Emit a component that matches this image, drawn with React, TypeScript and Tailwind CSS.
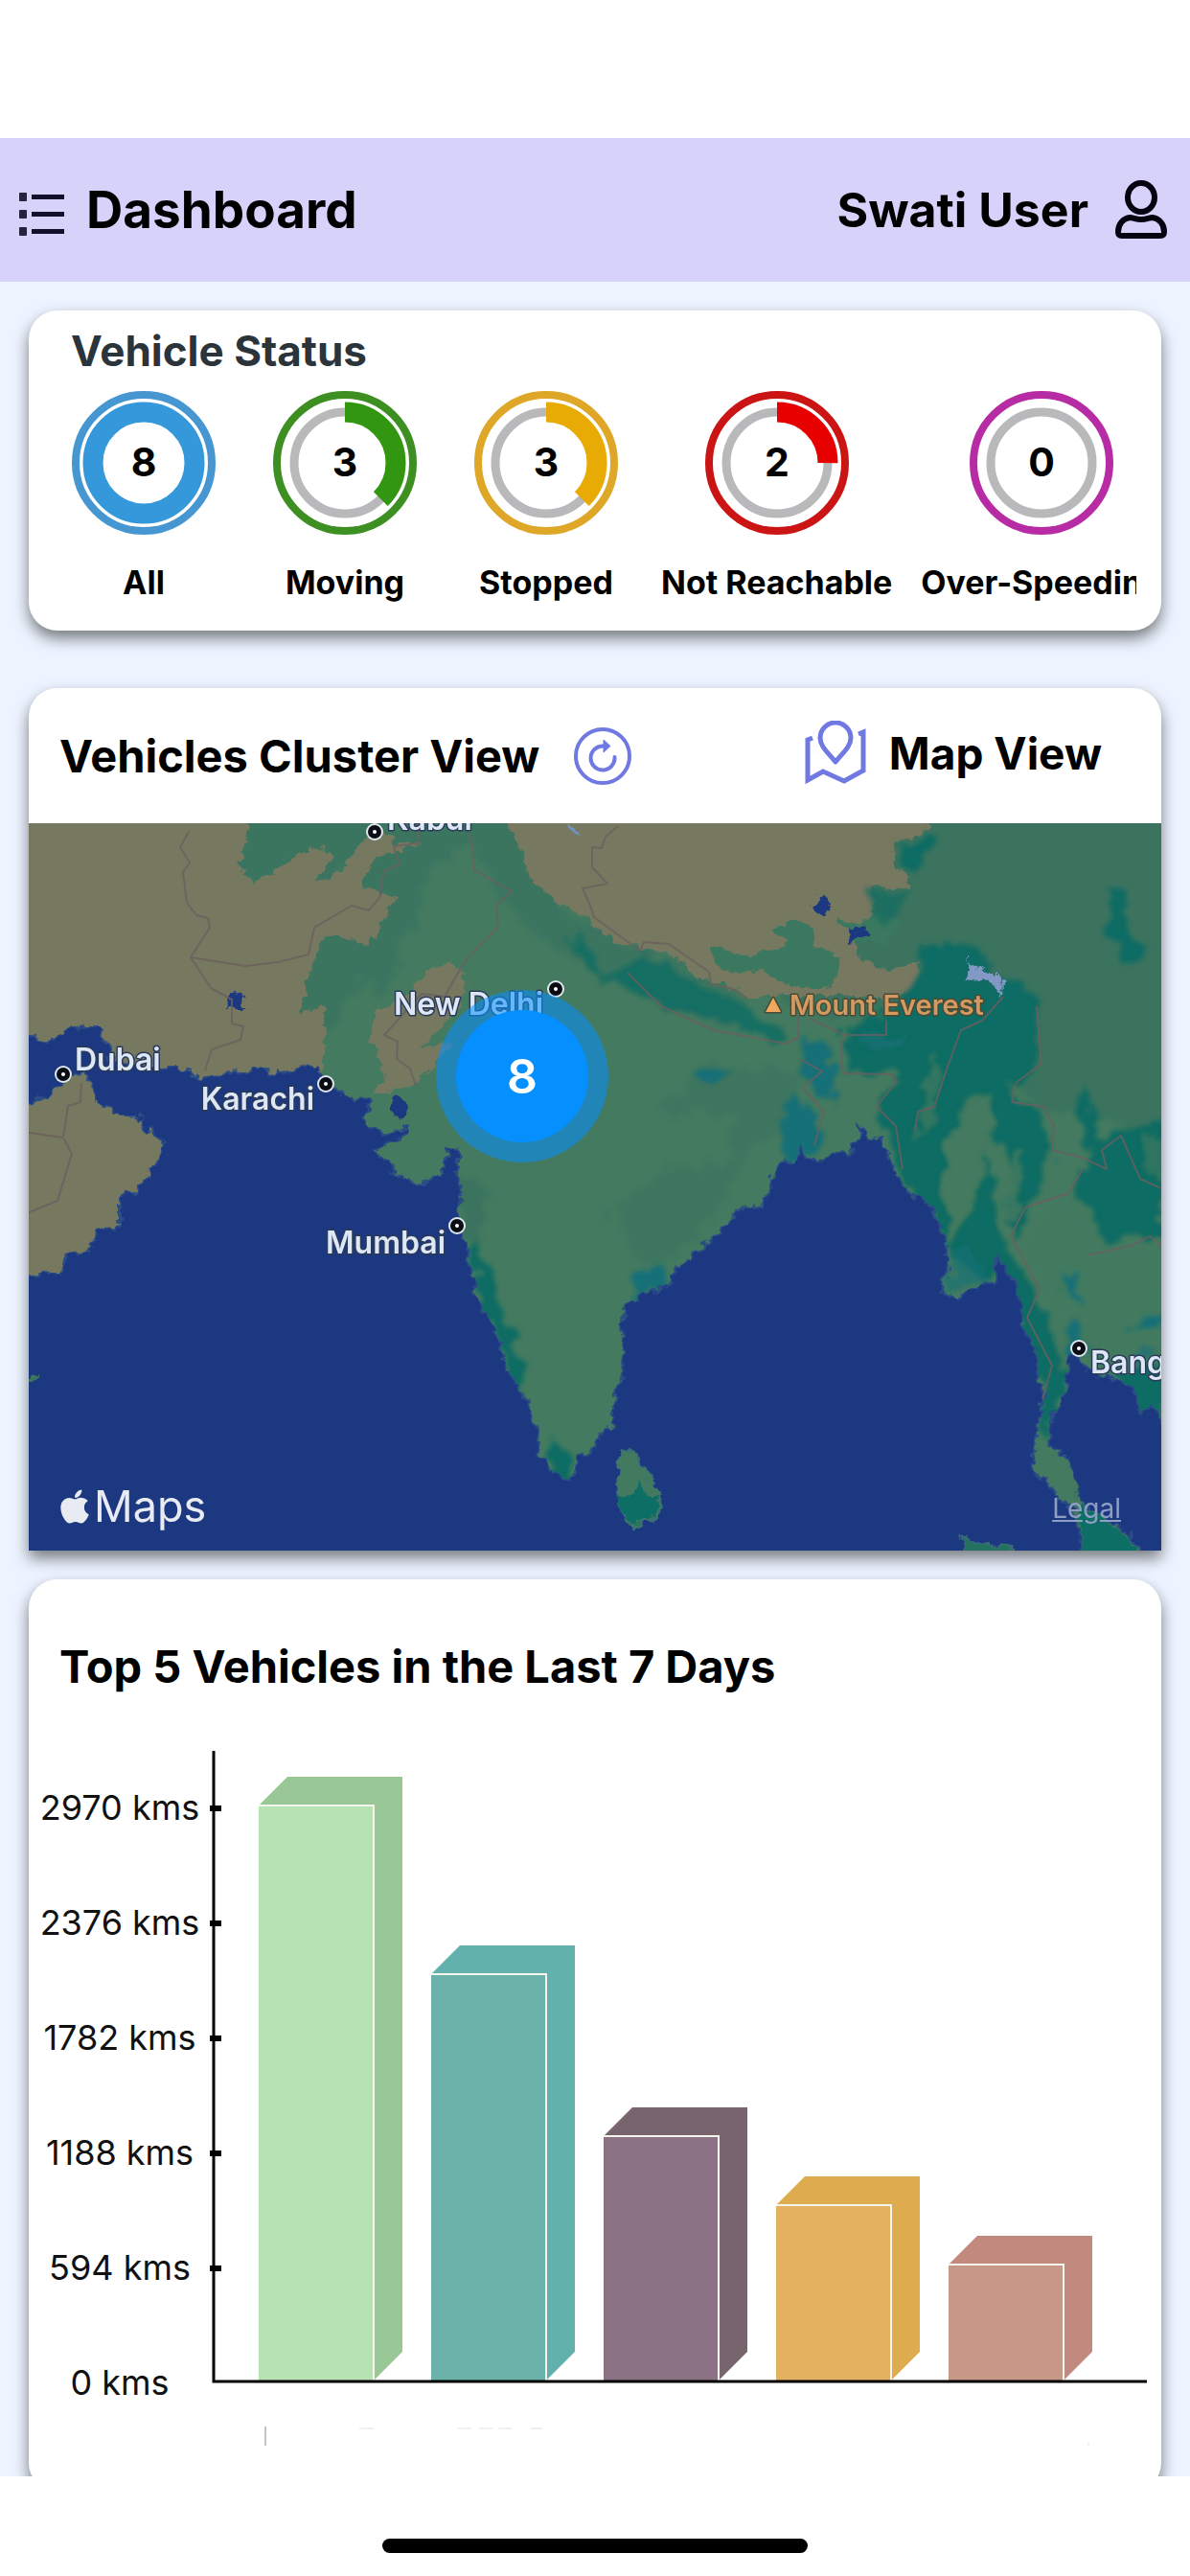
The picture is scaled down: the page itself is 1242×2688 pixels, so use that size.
// Fleet dashboard: vehicle status rings, cluster map and top-distance chart.

import { FaApple } from "react-icons/fa";

interface StatusItem {
  label: string;
  count: number;
  ring: string;
  fill: string;
}

const TOTAL = 8;

const STATUSES: StatusItem[] = [
  { label: "All", count: 8, ring: "#4596d1", fill: "#3498db" },
  { label: "Moving", count: 3, ring: "#3d8f22", fill: "#329610" },
  { label: "Stopped", count: 3, ring: "#dfa727", fill: "#e8aa04" },
  { label: "Not Reachable", count: 2, ring: "#cb1414", fill: "#e60000" },
  { label: "Over-Speeding", count: 0, ring: "#b72ba4", fill: "#b72ba4" },
];

interface Bar {
  x: number;
  top: number;
  front: string;
  side: string;
}

const BARS: Bar[] = [
  { x: 270, top: 1884, front: "#b7e3b2", side: "#9ac796" },
  { x: 450, top: 2060, front: "#6bb2ab", side: "#62b1ac" },
  { x: 630, top: 2229, front: "#8b7385", side: "#77646c" },
  { x: 810, top: 2301, front: "#e4b161", side: "#deab4e" },
  { x: 990, top: 2363, front: "#c79887", side: "#c28a7e" },
];

const AXIS_BOTTOM = 2484;

const TICKS = [
  { y: 1887, label: "2970 kms" },
  { y: 2007, label: "2376 kms" },
  { y: 2127, label: "1782 kms" },
  { y: 2247, label: "1188 kms" },
  { y: 2367, label: "594 kms" },
  { y: 2487, label: "0 kms" },
];

interface City {
  name: string;
  pin: [number, number];
  text: [number, number];
  anchor: "start" | "end";
}

const CITIES: City[] = [
  { name: "Kabul", pin: [391, 868], text: [404, 866], anchor: "start" },
  { name: "New Delhi", pin: [580, 1032], text: [567, 1059], anchor: "end" },
  { name: "Dubai", pin: [66, 1121], text: [78, 1117], anchor: "start" },
  { name: "Karachi", pin: [340, 1131], text: [328, 1158], anchor: "end" },
  { name: "Mumbai", pin: [477, 1279], text: [465, 1308], anchor: "end" },
  { name: "Bangkok", pin: [1126, 1407], text: [1138, 1433], anchor: "start" },
];

function ListIcon() {
  return (
    <svg viewBox="0 0 48 56" className="h-14 w-12" aria-hidden="true">
      {[14, 32, 50].map((y) => (
        <g key={y} fill="#12102b">
          <rect x="0" y={y - 4} width="8" height="9" rx="1" opacity="0.9" />
          <rect x="13" y={y - 2} width="34" height="5" />
        </g>
      ))}
    </svg>
  );
}

function UserIcon() {
  return (
    <svg viewBox="0 0 54 62" className="h-[62px] w-[54px]" fill="none" stroke="#05030f" strokeWidth="6" strokeLinejoin="round" aria-hidden="true">
      <ellipse cx="27" cy="18" rx="14" ry="15" />
      <path d="M15 39C8 40 3 46 3 54C3 57 4 58 7 58H47C50 58 51 57 51 54C51 46 46 40 39 39C35 39 33 41 27 41C21 41 19 39 15 39Z" />
    </svg>
  );
}

function RefreshIcon() {
  return (
    <svg viewBox="0 0 60 60" className="size-15" fill="none" stroke="#7078e2" strokeWidth="4" aria-hidden="true">
      <circle cx="30" cy="30" r="28" />
      <path d="M31 19.5A12.500 12.500 0 1 0 42.500 31" strokeLinecap="round" />
      <path d="M31 13L38 19.500L31 26Z" fill="#7078e2" strokeWidth="1" />
    </svg>
  );
}

function MapIcon() {
  return (
    <svg viewBox="0 0 64 68" className="h-[68px] w-16" fill="none" stroke="#7078e2" strokeWidth="5" aria-hidden="true">
      <path d="M8 18L3 20V62L19 53L41 63L61 52V12L56 14" />
      <path d="M32 43C24 33 16 27 16 18A16 16 0 0 1 48 18C48 27 40 33 32 43Z" strokeLinejoin="round" />
    </svg>
  );
}

function StatusRing({ item }: { item: StatusItem }) {
  const r = 53;
  const length = 2 * Math.PI * r;
  const share = item.count / TOTAL;
  return (
    <li className="flex min-w-[180px] shrink-0 flex-col items-center">
      <button type="button" className="flex flex-col items-center">
        <svg viewBox="0 0 150 150" className="size-[150px]">
          <circle cx="75" cy="75" r="71" fill="none" stroke={item.ring} strokeWidth="8" />
          <circle cx="75" cy="75" r={r} fill="none" stroke="#b9b8ba" strokeWidth="9" />
          {item.count > 0 && (
            <circle
              cx="75"
              cy="75"
              r={r}
              fill="none"
              stroke={item.fill}
              strokeWidth="21"
              strokeDasharray={`${length * share} ${length}`}
              transform="rotate(-90 75 75)"
            />
          )}
          <text x="75" y="89" textAnchor="middle" fontSize="41" fontWeight="700">
            {item.count}
          </text>
        </svg>
        <span className="mt-[30px] text-[34px] leading-10 font-bold whitespace-nowrap">{item.label}</span>
      </button>
    </li>
  );
}

function ClusterMap() {
  return (
    <svg viewBox="30 859 1182 759" className="block h-auto w-full" role="img" aria-label="Vehicle cluster map">
      <defs>
        <filter id="rough" x="0" y="0" width="100%" height="100%">
          <feTurbulence type="fractalNoise" baseFrequency="0.09" numOctaves="3" seed="4" result="n" />
          <feDisplacementMap in="SourceGraphic" in2="n" scale="14" xChannelSelector="R" yChannelSelector="G" />
        </filter>
        <filter id="soft" x="-10%" y="-10%" width="120%" height="120%">
          <feTurbulence type="fractalNoise" baseFrequency="0.05" numOctaves="3" seed="9" result="n" />
          <feDisplacementMap in="SourceGraphic" in2="n" scale="28" xChannelSelector="R" yChannelSelector="G" result="d" />
          <feGaussianBlur in="d" stdDeviation="2" />
        </filter>
      </defs>
      <rect x="30" y="859" width="1182" height="759" fill="#437a60" />

      {/* terrain shading */}
      <g filter="url(#soft)">
        <path fill="#3b7561" d="M240 840H530L560 915L600 960L690 1000L780 1040L760 1075L700 1050L630 1020L570 985L520 930L490 880L450 900L440 950L415 980L415 1020L400 1040L380 1020L365 1040L340 1080L300 1060L320 970L410 930L370 930V900L330 925L240 930Z" />
        <path fill="#3b735f" d="M900 840H1230V1190L1180 1180L1130 1160L1085 1160L1060 1100L1000 1060L860 1060L700 1000L880 960Z" />
        <path fill="#3b735f" opacity="0.7" d="M690 1160L740 1110L830 1120L828 1180L790 1190L770 1220L760 1160Z" />
        <path fill="#3b735f" d="M640 1260L700 1220L770 1215L730 1290L680 1320L655 1300Z" opacity="0.7" />
        <path fill="#3b735f" d="M478 1225L510 1240L500 1300L482 1290Z" />
      </g>

      {/* dry areas */}
      <g filter="url(#rough)" fill="#767861">
        <path d="M10 840H257L260 870L247 903L267 921L294 905L310 892L340 885L348 893L329 920L355 910L375 885L392 859L410 878L441 882L392 895L378 924L414 937L404 953L392 975L382 988L363 977L341 977L327 997L320 1027L314 1058L335 1047L341 1080L338 1130L200 1150L300 1400H10Z" />
        <path d="M473 1003L488 1027L481 1050L461 1070L441 1095L469 1088L453 1113L428 1133L392 1142L402 1117L386 1087L392 1057L428 1037L445 1013Z" />
        <path d="M526 840L530 862L547 893L555 917L579 940L612 957L618 968L645 983L682 992L706 997L727 1020L760 1028L780 1040H952L962 1022L956 1003L928 1013L897 1000L893 983L911 967L915 955L907 928L948 925L948 912L932 900L934 877L964 873L975 840Z" />
      </g>
      <g filter="url(#rough)" fill="#3b7860">
        <path d="M741 987L776 997L809 993L821 983L807 970L829 960L850 967V987L878 1000L866 1032L817 1027L797 1013L752 1012Z" />
        <path d="M872 957L895 965L912 953L940 960L925 985L893 983Z" />
      </g>

      {/* dense forest */}
      <g filter="url(#soft)" fill="#0a6c63">
        <path opacity="0.85" d="M592 975L610 990L640 1012L661 1004L690 1002L711 1022L743 1033L775 1047L795 1062L822 1078L806 1084L764 1070L702 1052L653 1028L615 1008Z" />
        <path d="M936 880L972 875L965 905L945 910L938 895Z" />
        <path d="M912 928L950 932L930 955L925 970L912 950Z" opacity="0.7" />
        <path d="M1158 930L1175 940L1178 975L1200 985L1180 1010L1170 1008L1160 980Z" />
        <path d="M960 990L990 980L1030 990L1030 1020L1080 1032L1084 1110L1060 1130L1056 1150L1090 1158L1095 1200L1075 1260L1060 1290L1050 1260L1060 1220L1035 1180L1035 1140L1010 1150L990 1200L985 1270L990 1310L975 1270L945 1235L930 1200L915 1165L925 1140L940 1120L885 1118L880 1070L920 1060L955 1030Z" />
        <path d="M990 1300L1015 1260L1030 1200L1045 1290L1070 1330L1085 1370L1100 1400L1112 1440L1100 1480L1090 1500L1085 1440L1060 1370L1045 1330L1010 1330Z" />
        <path d="M1125 1130L1140 1150L1150 1185L1215 1170V1300L1190 1290L1150 1300L1140 1260L1120 1250L1140 1200L1125 1180Z" />
        <path d="M1160 1430L1215 1420V1490L1190 1475Z" />
        <path d="M496 1295L510 1325L520 1360L535 1385L538 1410L550 1425L545 1452L530 1440L522 1400L505 1370L494 1330Z" />
        <path d="M575 1500L590 1510L602 1530L590 1546L570 1535Z" />
      </g>
      <g filter="url(#soft)" fill="#437a60">
        <path d="M1000 1160L1035 1150L1025 1200L1030 1220L1010 1260L990 1290L985 1240L990 1190Z" opacity="0.8" />
        <path d="M975 1100L985 1110L970 1180L958 1190L965 1140Z" opacity="0.7" />
        <path d="M1060 1200L1075 1205L1065 1260L1050 1290L1045 1250Z" opacity="0.8" />
        <path d="M1190 1180L1215 1190V1235L1195 1225Z" opacity="0.6" />
        <path d="M1080 1300L1110 1250L1130 1270L1140 1310L1215 1300V1420L1160 1430L1135 1390L1115 1350L1108 1400L1100 1350Z" />
      </g>

      {/* wetlands */}
      <g filter="url(#soft)" fill="#186f78">
        <path d="M842 1080L862 1085L872 1120L870 1155L850 1145L835 1120Z" />
        <path d="M830 1140L850 1165L862 1190L845 1205L815 1225L815 1170Z" />
        <path d="M724 1118L770 1113L745 1135Z" />
        <path d="M895 1080H945L940 1092L895 1095Z" opacity="0.7" />
        <path d="M663 1328L690 1325L698 1340L658 1358Z" />
        <path d="M1000 1300L1015 1300L1030 1335L995 1350L988 1340Z" opacity="0.6" />
        <path d="M1105 1325L1125 1330L1130 1360L1112 1350Z" />
        <path d="M1118 1370L1130 1400L1140 1412L1112 1425Z" />
        <path d="M1190 1370H1215V1390L1185 1390Z" />
        <path d="M1186 1400L1205 1408L1185 1425Z" opacity="0.7" />
      </g>

      {/* sea */}
      <g filter="url(#rough)" fill="#1f3881">
        <path
          stroke="#2c4d86"
          strokeWidth="2"
          d="M10 1080L30 1080L51 1087L65 1080L73 1075L93 1069L104 1072L111 1090L115 1105L140 1114L188 1115L208 1125L237 1121L271 1116L286 1121L306 1117L324 1111L335 1120L349 1132L357 1145L371 1147L384 1144L388 1152L377 1164L384 1175L404 1184L424 1177L418 1190L390 1198L410 1220L435 1237L455 1229L465 1217L465 1197L477 1199L477 1223L482 1242L477 1262L486 1295L492 1329L498 1355L518 1389L528 1429L549 1462L559 1489L565 1519L577 1539L590 1544L601 1535L604 1522L618 1515L630 1490L641 1489L641 1459L653 1425L648 1409L651 1365L665 1355L700 1339L700 1329L733 1302L758 1279L770 1260L794 1257L807 1242L805 1232L811 1219L832 1207L838 1195L843 1208L856 1211L872 1202L884 1205L897 1190L895 1170L907 1190L919 1187L927 1205L936 1229L954 1249L972 1259L987 1292L989 1319L983 1347L999 1357L1016 1344L1036 1339L1042 1312L1048 1322L1061 1342L1069 1385L1083 1419L1089 1459L1083 1495L1077 1532L1089 1542L1106 1562L1124 1582L1128 1640H10V1332L41 1329L63 1329L69 1309L96 1304L102 1284L124 1280L124 1252L133 1242L143 1245L159 1219L169 1205L173 1194L155 1179L141 1165L116 1159L100 1145L94 1132L90 1117L80 1119L59 1135L47 1145L30 1153H10Z"
        />
        <path
          stroke="#2c4d86"
          strokeWidth="2"
          d="M1116 1415L1114 1449L1095 1485L1098 1512L1112 1519L1122 1545L1126 1569L1171 1594L1196 1630H1230V1500L1212 1484L1202 1467L1192 1477L1181 1449L1163 1437L1134 1432L1124 1413Z"
        />
        <path d="M246 1032L256 1050L262 1052H238Z" />
        <path d="M412 1142L424 1150L426 1162L418 1168L404 1158Z" />
        <path d="M858 933L868 946L860 957L846 946Z" />
        <path d="M885 972L906 965L904 978L886 982Z" />
      </g>
      <g filter="url(#rough)">
        <path fill="#437a60" stroke="#3a6d78" strokeWidth="2" d="M651 1512L663 1515L676 1539L690 1560L688 1580L663 1593L651 1587L644 1552L646 1525Z" />
        <path fill="#0b6e66" d="M645 1562L662 1558L668 1545L674 1560L688 1562L684 1580L663 1590L652 1585Z" />
        <path fill="#24725f" stroke="#3a6d78" strokeWidth="2" d="M1003 1600L1022 1610L1057 1614L1065 1640H1010Z" />
        <path fill="#0b6e66" d="M1126 1572L1170 1596L1190 1625H1128Z" />
        <path fill="#8199c4" d="M1008 999L1027 1013L1046 1013L1044 1038L1032 1025L1005 1022L1015 1013Z" />
        <path fill="#6f93c0" d="M592 859H598L604 876L598 872Z" />
        <path fill="#3a7560" d="M20 1435L44 1434L34 1441H20Z" />
      </g>

      {/* borders */}
      <g fill="none" stroke="#6b605f" strokeWidth="2" opacity="0.8" strokeLinejoin="round">
        <path d="M197 868L188 884L198 900L191 910L195 942L205 955L217 958L219 968L199 999L256 1008L290 1004L322 996L328 968L367 945L385 950L397 935L400 910L417 902L411 883L436 880V859" />
        <path d="M199 999L220 1031L242 1043V1068L254 1071L251 1085L221 1095L214 1117" />
        <path d="M491 870L495 908L534 930L518 945L520 967L493 994L481 1010L464 1040L440 1037L401 1080L415 1087L414 1105L428 1115L434 1133" />
        <path d="M645 862L632 873L628 885L618 884V905L634 922L608 927L616 945L620 957L668 992L672 983L698 985L740 1014L742 1027L765 1032L780 1042" />
        <path d="M655 1015L690 1050L745 1075L820 1089L833 1083V1060" />
        <path d="M845 1063L880 1079L878 1105L880 1120L930 1121L936 1128L915 1155L935 1175L942 1220" />
        <path d="M835 1105L858 1118L838 1135L860 1160L850 1195" />
        <path d="M880 1080H925V1065M1047 1040L1025 1065L1003 1075L990 1110L975 1155L958 1160L955 1180" />
        <path d="M1082 1050L1087 1110L1060 1130L1056 1150L1090 1155L1100 1175L1098 1200L1130 1208L1155 1220L1150 1200L1170 1185L1190 1230L1212 1240" />
        <path d="M1130 1220L1115 1245L1070 1260L1055 1290L1085 1345L1072 1375L1098 1425L1088 1460" />
        <path d="M85 1130L84 1150L71 1154L66 1187L30 1182M66 1187L75 1204L60 1253L30 1265" />
        <path d="M1135 1310L1180 1300L1200 1290L1212 1300" />
      </g>

      {/* place names */}
      <g fontSize="32" fontWeight="600" paintOrder="stroke" strokeWidth="3" strokeLinejoin="round">
        {CITIES.map((c) => (
          <g key={c.name}>
            <circle cx={c.pin[0]} cy={c.pin[1]} r="9" fill="#dfe6ee" />
            <circle cx={c.pin[0]} cy={c.pin[1]} r="7" fill="#0b0d14" />
            <circle cx={c.pin[0]} cy={c.pin[1]} r="2" fill="#ffffff" />
            <text x={c.text[0]} y={c.text[1]} textAnchor={c.anchor} fill="#dde7f6" stroke="#2b3a58">
              {c.name}
            </text>
          </g>
        ))}
        <path d="M807 1041L815 1056H799Z" fill="#f0a860" stroke="#4a4a35" />
        <text x="824" y="1059" fontSize="29" fill="#d29a61" stroke="#4a4a35">
          Mount Everest
        </text>
      </g>

      {/* vehicle cluster */}
      <circle cx="545" cy="1123" r="90" fill="#058fff" opacity="0.55" />
      <circle cx="545" cy="1123" r="69" fill="#058fff" />
      <text x="545" y="1141" textAnchor="middle" fontSize="50" fontWeight="600" fill="#ffffff">
        {TOTAL}
      </text>
    </svg>
  );
}

function DistanceChart() {
  return (
    <svg viewBox="30 1820 1182 780" className="block h-auto w-full" role="img" aria-label="Distance driven per vehicle">
      {BARS.map(({ x, top, front, side }) => (
        <g key={x}>
          <path
            fill={side}
            d={`M${x} ${top}L${x + 30} ${top - 30}H${x + 150}V${AXIS_BOTTOM - 30}L${x + 120} ${AXIS_BOTTOM}H${x}Z`}
          />
          <rect x={x} y={top} width="120" height={AXIS_BOTTOM - top} fill={front} />
          <path d={`M${x} ${top}H${x + 120}V${AXIS_BOTTOM}`} fill="none" stroke="#f6f6ee" strokeWidth="2" />
        </g>
      ))}
      <path d="M223 1827V2485H1197" fill="none" stroke="#000000" strokeWidth="3" />
      {TICKS.map(({ y, label }) => (
        <g key={label}>
          {y < AXIS_BOTTOM && <rect x="219" y={y - 3} width="12" height="6" />}
          <text x="125" y={y + 12} textAnchor="middle" fontSize="36" fill="#111111">
            {label}
          </text>
        </g>
      ))}
      {/* faded-out x labels */}
      <path d="M277 2532V2552" stroke="#c4c4c4" strokeWidth="2" />
      <path d="M375 2534H390M478 2534H492M500 2534H514M520 2534H534M554 2534H566M1136 2549V2552" stroke="#f1f1f1" strokeWidth="2" />
    </svg>
  );
}

export default function App() {
  return (
    <div className="flex h-screen flex-col bg-white font-['Inter','Liberation_Sans',sans-serif] text-black">
      <header className="mt-36 flex h-[150px] shrink-0 items-center justify-between bg-[#d7d2fa] pr-6 pl-5">
        <div className="flex items-center gap-5">
          <button type="button" aria-label="Open menu">
            <ListIcon />
          </button>
          <h1 className="pl-0.5 text-[53px] leading-[60px] font-bold">Dashboard</h1>
        </div>
        <button type="button" className="flex items-center gap-7">
          <span className="text-[50px] leading-[60px] font-bold">Swati User</span>
          <UserIcon />
        </button>
      </header>

      <main className="flex min-h-0 flex-1 flex-col overflow-y-auto bg-[#edf4ff] px-[30px] pt-[30px] [scrollbar-width:none]">
        <section className="shrink-0 rounded-[30px] bg-white pt-4 pr-[26px] pb-[30px] pl-[30px] shadow-[0_8px_16px_rgba(0,0,0,0.5)]">
          <h2 className="pl-[14px] text-[44px] leading-[52px] font-bold text-[#2b343b]">Vehicle Status</h2>
          <ul className="mt-4 flex gap-[30px] overflow-x-hidden">
            {STATUSES.map((item) => (
              <StatusRing key={item.label} item={item} />
            ))}
          </ul>
        </section>

        <section className="mt-[60px] shrink-0 rounded-t-[30px] bg-white shadow-[0_8px_16px_rgba(0,0,0,0.5)]">
          <div className="flex h-[141px] items-center justify-between pr-[62px] pl-8">
            <div className="flex items-center gap-9">
              <h2 className="text-[47px] leading-[54px] font-bold">Vehicles Cluster View</h2>
              <button type="button" aria-label="Refresh map">
                <RefreshIcon />
              </button>
            </div>
            <button type="button" className="flex items-center gap-6 pb-1.5">
              <MapIcon />
              <span className="text-[46px] leading-[54px] font-bold">Map View</span>
            </button>
          </div>
          <div className="relative">
            <ClusterMap />
            <div className="absolute bottom-4 left-7 flex items-center text-[#e9ebf3]">
              <FaApple className="size-10" aria-hidden="true" />
              <span className="text-[45px] leading-[60px]">Maps</span>
            </div>
            <a href="#legal" className="absolute right-[42px] bottom-6 text-[28px] leading-10 text-[#8f9fc4] underline">
              Legal
            </a>
          </div>
        </section>

        <section className="mt-[30px] shrink-0 rounded-[30px] bg-white pt-16 shadow-[0_8px_16px_rgba(0,0,0,0.5)]">
          <h2 className="mb-[54px] pl-8 text-[47px] leading-[54px] font-bold">Top 5 Vehicles in the Last 7 Days</h2>
          <DistanceChart />
        </section>
      </main>

      <footer className="flex h-[104px] shrink-0 items-end justify-center pb-6">
        <div className="h-[15px] w-[444px] rounded-full bg-black" />
      </footer>
    </div>
  );
}
